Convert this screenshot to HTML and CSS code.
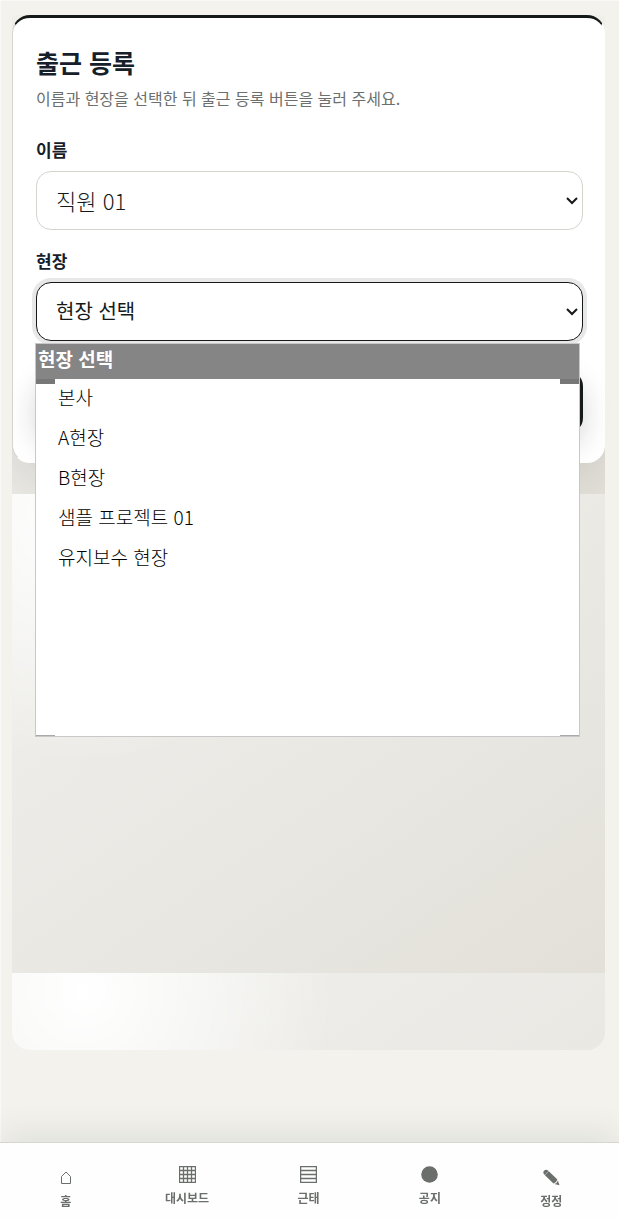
FILE: index.html
```html
<!DOCTYPE html>
<html lang="ko">
<head>
	<meta charset="UTF-8">
	<meta name="viewport" content="width=device-width, initial-scale=1">
	<title>출근 등록</title>
	<link rel="stylesheet" href="styles.css">
</head>
<body>
	<main class="shell">
		<form class="card">
			<h1 class="title">출근 등록</h1>
			<p class="desc">이름과 현장을 선택한 뒤 출근 등록 버튼을 눌러 주세요.</p>

			<div class="field">
				<label for="employee">이름</label>
				<select id="employee" class="thin">
					<option>직원 01</option>
				</select>
			</div>

			<div class="field">
				<label for="site">현장</label>
				<select id="site" class="open">
					<option>현장 선택</option>
					<option>본사</option>
					<option>A현장</option>
					<option>B현장</option>
					<option>샘플 프로젝트 01</option>
					<option>유지보수 현장</option>
				</select>
				<ul class="menu" role="listbox" aria-label="현장">
					<li class="selected" role="option" aria-selected="true">현장 선택</li>
					<li role="option">본사</li>
					<li role="option">A현장</li>
					<li role="option">B현장</li>
					<li role="option">샘플 프로젝트 01</li>
					<li role="option">유지보수 현장</li>
				</ul>
			</div>

			<button type="button" class="submit">출근 등록</button>
		</form>
	</main>

	<nav class="tabs">
		<a href="#" class="low">
			<svg width="12" height="13" viewBox="0 0 12 13" fill="none" stroke="currentColor"><path d="M1.5 12.5V5.5L6 1L10.5 5.5V12.5Z"/></svg>
			<span>홈</span>
		</a>
		<a href="#">
			<svg width="17" height="17" viewBox="0 0 17 17" fill="none" stroke="currentColor"><path d="M.5 .5H16.5V16.5H.5ZM4.5 .5V16.5M8.5 .5V16.5M12.5 .5V16.5M.5 4.5H16.5M.5 8.5H16.5M.5 12.5H16.5" stroke-width="1.3"/></svg>
			<span>대시보드</span>
		</a>
		<a href="#">
			<svg width="17" height="17" viewBox="0 0 17 17" fill="none" stroke="currentColor"><path d="M.5 .5H16.5V16.5H.5ZM.5 4.5H16.5M.5 8.5H16.5M.5 12.5H16.5" stroke-width="1.5"/></svg>
			<span>근태</span>
		</a>
		<a href="#">
			<svg width="17" height="17" viewBox="0 0 17 17" fill="currentColor"><circle cx="8.5" cy="8.5" r="8.3"/></svg>
			<span>공지</span>
		</a>
		<a href="#" class="low">
			<svg width="17" height="17" viewBox="0 0 17 17" fill="currentColor"><path d="M1 1.7Q2.8-.2 4.8 1.3L5.6 2.1L1.7 5.9L.9 5Q-.3 3.3 1 1.7ZM5.8 2.3L14.4 10.6Q14 12.8 10.5 14.6L1.9 6.2ZM14.9 11.5L16.5 16.3L11.4 15Q14.5 13.8 14.9 11.5Z"/></svg>
			<span>정정</span>
		</a>
	</nav>
</body>
</html>
```
FILE: styles.css
```css
*{
	box-sizing: border-box;
}
body{
	margin: 0;
	padding: 15px 14px 169px 12px;
	min-height: 100vh;
	background-color: #f3f2ed;
	box-shadow: inset 1px 1px 0 #f9f9f7;
	color: #16202a;
	font-family: "Noto Sans CJK KR", "Noto Sans", sans-serif;
}
.shell{
	min-height: calc(100vh - 184px);
	border-radius: 18px;
	background-image:
		radial-gradient(circle at 12% 4%, #ffffff 0, rgba(255,255,255,0) 250px),
		linear-gradient(145deg, #f0f0ed 0%, #eae9e4 50%, #e3e0d9 100%);
	background-size: 100% 479px;
}
.card{
	position: relative;
	display: flex;
	flex-direction: column;
	padding: 26px 21px 29px 23px;
	background-color: white;
	border: 1px solid #d8d5cf;
	border-top: 3px solid #151918;
	border-right-color: white;
	border-bottom-color: white;
	border-radius: 18px;
}
/* card shadow, cut off where the first background tile ends */
.card::before{
	content: "";
	position: absolute;
	inset: -3px -1px -1px;
	border-radius: 18px;
	box-shadow: 0 16px 40px rgba(40,40,30,0.1);
	clip-path: inset(0 0 -31px 0);
	pointer-events: none;
}
.title{
	margin: 0 0 6px;
	font-size: 25px;
	line-height: 36px;
	font-weight: bold;
}
.desc{
	margin: 0 0 28px;
	font-size: 16px;
	line-height: 24px;
	color: #6b6f6d;
}
.field{
	position: relative;
	display: flex;
	flex-direction: column;
	gap: 9px;
	margin-bottom: 19px;
}
label{
	font-size: 17px;
	line-height: 24px;
	font-weight: bold;
}
select{
	appearance: none;
	width: 100%;
	height: 59px;
	padding: 0 20px 2px 19px;
	border: 1px solid #d5d4cd;
	border-radius: 15px;
	outline: none;
	background: white url("data:image/svg+xml,%3Csvg xmlns='http://www.w3.org/2000/svg' width='12' height='8' fill='none' stroke='%23151918' stroke-width='2'%3E%3Cpath d='M1 1L6 6L11 1'/%3E%3C/svg%3E") no-repeat right 4px center;
	color: #151918;
	font-family: inherit;
	font-size: 20px;
}
.thin{
	font-size: 22px;
	font-weight: 300;
}
.open{
	border-color: #151918;
	box-shadow: 0 0 0 4px #e8e8e8;
}
/* opened list, lies over the button and the shell */
.menu{
	position: absolute;
	z-index: 2;
	top: 94px;
	left: -1px;
	right: 3px;
	height: 394px;
	margin: 0;
	padding: 0;
	list-style: none;
	border: 1px solid #c8c8c8;
	background-color: white;
	background-image:
		linear-gradient(#777, #777),
		linear-gradient(#777, #777),
		linear-gradient(#aaa, #aaa),
		linear-gradient(#aaa, #aaa);
	background-repeat: no-repeat;
	background-position: 0 34px, 100% 34px, 0 100%, 100% 100%;
	background-size: 19px 6px, 19px 6px, 19px 1px, 19px 1px;
	color: black;
	font-size: 19px;
	font-weight: 300;
}
.menu li{
	padding-left: 22px;
	line-height: 40px;
}
.menu .selected{
	margin-bottom: -2px;
	padding: 0 0 5px 2px;
	background-color: #858585;
	color: white;
	font-weight: bold;
	line-height: 30px;
}
.submit{
	height: 62px;
	margin-top: 11px;
	border: none;
	border-radius: 15px;
	background-color: #151918;
	box-shadow: 0 12px 28px rgba(21,25,24,0.18);
	color: white;
	font-family: inherit;
	font-size: 18px;
	font-weight: bold;
}
.tabs{
	position: fixed;
	left: 0;
	right: 0;
	bottom: 0;
	display: grid;
	grid-template-columns: repeat(5, 1fr);
	height: 77px;
	padding: 23px 7px 0 5px;
	background-color: #fefefe;
	border-top: 1px solid #d8d5cf;
	box-shadow: 0 -12px 32px rgba(21,35,30,0.07);
}
.tabs a{
	display: flex;
	flex-direction: column;
	align-items: center;
	gap: 6px;
	color: #6a6f6b;
	text-decoration: none;
	font-size: 12px;
	line-height: 18px;
	font-weight: bold;
}
.tabs .low{
	padding-top: 3px;
}
.tabs .low svg{
	height: 17px;
}
```
